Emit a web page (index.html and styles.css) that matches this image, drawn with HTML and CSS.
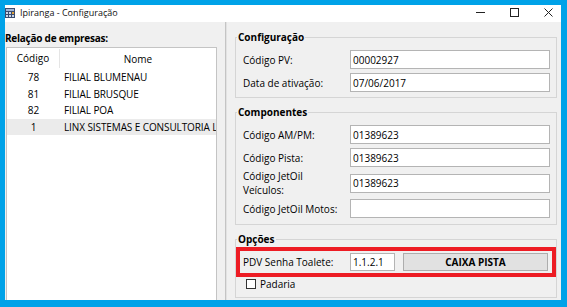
FILE: index.html
```html
<!DOCTYPE html>
<html lang="pt-BR">

<head>
    <meta charset="UTF-8">
    <title>Ipiranga - Configuração</title>
    <link rel="stylesheet" href="styles.css">
</head>

<body>
<div class="window">

  <!-- title bar -->
  <div class="titlebar">
    <svg class="app-icon" width="10" height="10" viewBox="0 0 10 10">
      <rect x="0" y="0" width="10" height="10" fill="#3b4c6e"/>
      <rect x="1" y="1" width="8" height="2" fill="#9fb6d8"/>
      <rect x="1" y="4" width="2" height="2" fill="#c9d6ea"/>
      <rect x="4" y="4" width="2" height="2" fill="#c9d6ea"/>
      <rect x="7" y="4" width="2" height="2" fill="#e0a23a"/>
      <rect x="1" y="7" width="2" height="2" fill="#c9d6ea"/>
      <rect x="4" y="7" width="2" height="2" fill="#c9d6ea"/>
      <rect x="7" y="7" width="2" height="2" fill="#c9d6ea"/>
    </svg>
    <span class="title">Ipiranga - Configuração</span>
    <div class="caption-buttons">
      <svg width="9" height="9" viewBox="0 0 9 9"><line x1="0" y1="4.5" x2="9" y2="4.5" stroke="#222" stroke-width="1"/></svg>
      <svg width="9" height="9" viewBox="0 0 9 9"><rect x="0.5" y="0.5" width="8" height="8" fill="none" stroke="#222" stroke-width="1"/></svg>
      <svg width="9" height="9" viewBox="0 0 9 9"><path d="M0.5 0.5 L8.5 8.5 M8.5 0.5 L0.5 8.5" stroke="#222" stroke-width="1"/></svg>
    </div>
  </div>

  <div class="client">

    <!-- companies list -->
    <div class="left-pane">
      <div class="pane-label">Relação de empresas:</div>
      <div class="list">
        <div class="list-head">
          <span class="col-code">Código</span>
          <span class="col-name">Nome</span>
        </div>
        <div class="list-row"><span class="col-code">78</span><span class="col-name">FILIAL BLUMENAU</span></div>
        <div class="list-row"><span class="col-code">81</span><span class="col-name">FILIAL BRUSQUE</span></div>
        <div class="list-row"><span class="col-code">82</span><span class="col-name">FILIAL POA</span></div>
        <div class="list-row is-selected"><span class="col-code">1</span><span class="col-name">LINX SISTEMAS E CONSULTORIA LT</span></div>
      </div>
    </div>

    <div class="splitter"></div>

    <!-- settings -->
    <div class="right-pane">
      <fieldset class="group">
        <legend>Configuração</legend>
        <div class="form-row">
          <label>Código PV:</label>
          <input class="field" type="text" value="00002927">
        </div>
        <div class="form-row">
          <label>Data de ativação:</label>
          <input class="field" type="text" value="07/06/2017">
        </div>
      </fieldset>

      <fieldset class="group group-next">
        <legend>Componentes</legend>
        <div class="form-row">
          <label>Código AM/PM:</label>
          <input class="field" type="text" value="01389623">
        </div>
        <div class="form-row">
          <label>Código Pista:</label>
          <input class="field" type="text" value="01389623">
        </div>
        <div class="form-row is-tall">
          <label>Código JetOil<br>Veículos:</label>
          <input class="field" type="text" value="01389623">
        </div>
        <div class="form-row">
          <label>Código JetOil Motos:</label>
          <input class="field" type="text" value="">
        </div>
      </fieldset>

      <fieldset class="group group-next group-options">
        <legend>Opções</legend>
        <div class="highlight">
          <label>PDV Senha Toalete:</label>
          <input class="field" type="text" value="1.1.2.1">
          <button type="button" class="win-button">CAIXA PISTA</button>
        </div>
        <div class="check-row">
          <span class="checkbox"></span>
          <span>Padaria</span>
        </div>
      </fieldset>
    </div>

  </div>
</div>
</body>

</html>
```

FILE: styles.css
```css
* {
  box-sizing: border-box;
}

body {
  margin: 0;
  height: 307px;
  overflow: hidden;
  background: #00a2e8;
  font-family: "Open Sans", "Noto Sans", sans-serif;
  font-size: 10px;
  color: #000;
}

/* window frame */
.window {
  margin: 5px 6px 0 5px;
  height: 295px;
  background: #f0f0f0;
  display: flex;
  flex-direction: column;
}

.titlebar {
  height: 17px;
  background: #fff;
  display: flex;
  align-items: center;
}

.app-icon {
  margin-top: -1px;
}

.title {
  margin-left: 5px;
  font-size: 9px;
  color: #111;
  margin-top: -2px;
}

.caption-buttons {
  margin-left: auto;
  margin-right: 8px;
  display: flex;
  gap: 25px;
  margin-top: -2px;
}

.client {
  flex: 1;
  display: flex;
  overflow: hidden;
}

/* left side: list of companies */
.left-pane {
  width: 216px;
  flex: none;
  display: flex;
  flex-direction: column;
}

.pane-label {
  padding-top: 8px;
  line-height: 16px;
  font-weight: bold;
  letter-spacing: -0.25px;
}

.list {
  flex: 1;
  margin: 1px 0 -3px 1px;
  width: 211px;
  background: #fff;
  border: 1px solid #c4c4c4;
  overflow: hidden;
}

.list-head,
.list-row {
  display: flex;
  white-space: nowrap;
}

.list-head {
  height: 21px;
  align-items: center;
}

.list-row {
  height: 16.5px;
  align-items: center;
}

.col-code {
  width: 53px;
  flex: none;
  text-align: center;
}

.list-head .col-code {
  border-right: 1px solid #e5e5e5;
  line-height: 19px;
}

.list-head .col-name {
  flex: 1;
  text-align: center;
}

.list-row .col-name {
  padding-left: 3px;
  margin-left: 1px;
  letter-spacing: -0.1px;
}

.list-row.is-selected {
  background: #ebebeb;
}

.splitter {
  width: 0;
  flex: none;
  margin: 0 3px 0 4px;
  border-left: 1px solid #c4c4c4;
  border-right: 1px solid #e2e2e2;
}

/* right side: group boxes */
.right-pane {
  flex: 1;
  min-width: 0;
  padding: 0 4px 0 5px;
}

.group {
  margin: 7px 0 0 0;
  padding: 0 0 3px 0;
  border: 1px solid #d5d5d5;
  width: 322px;
  min-width: 0;
}

.group-next {
  margin-top: 6px;
  padding-bottom: 4px;
}

.group legend {
  margin-left: 1px;
  padding: 0 1px;
  line-height: 16px;
  font-weight: bold;
}

.form-row {
  display: grid;
  grid-template-columns: 107px 200px;
  align-items: center;
  height: 23px;
  padding-left: 7px;
}

.form-row:first-of-type {
  margin-top: 3px;
}

.form-row.is-tall {
  height: 28px;
  line-height: 14px;
}

.field {
  height: 19px;
  padding: 0 2px;
  border: 1px solid #b4b4b4;
  background: #fff;
  font: inherit;
  color: #000;
  outline: none;
}

/* red mark around the toilet password row */
.highlight {
  display: grid;
  grid-template-columns: 107px 45px 153px;
  align-items: center;
  height: 30px;
  padding-left: 3px;
  border: 4px solid #ed1c24;
}

.highlight .field {
  height: 18px;
}

.win-button {
  height: 18px;
  margin-left: 8px;
  background: #e1e1e1;
  border: 1px solid #adadad;
  font: inherit;
  font-weight: bold;
  color: #000;
  padding: 0;
}

.group-options {
  padding-bottom: 7px;
}

.check-row {
  display: flex;
  align-items: center;
  gap: 4px;
  height: 13px;
  padding-left: 10px;
}

.checkbox {
  width: 10px;
  height: 10px;
  background: #fff;
  border: 1px solid #333;
}
```
